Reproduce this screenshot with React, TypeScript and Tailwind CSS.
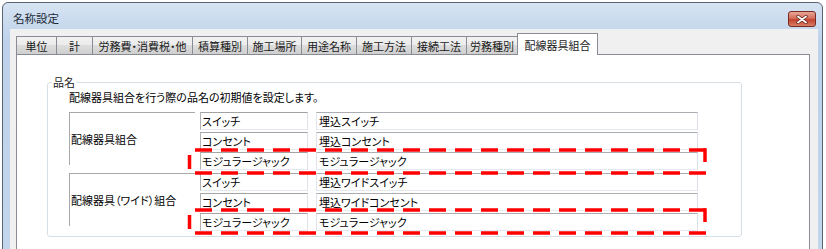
import React from "react"

const tabs = [
    { label: "単位", w: "w-[40px]" },
    { label: "計", w: "w-[36px]" },
    { label: "労務費・消費税・他", w: "w-[100px]" },
    { label: "積算種別", w: "w-[55px]" },
    { label: "施工場所", w: "w-[54px]" },
    { label: "用途名称", w: "w-[55px]" },
    { label: "施工方法", w: "w-[55px]" },
    { label: "接続工法", w: "w-[55px]" },
    { label: "労務種別", w: "w-[52px]" },
]

const groups = [
    {
        label: "配線器具組合",
        rows: [
            ["スイッチ", "埋込スイッチ"],
            ["コンセント", "埋込コンセント"],
            ["モジュラージャック", "モジュラージャック"],
        ],
    },
    {
        label: "配線器具（ワイド）組合",
        rows: [
            ["スイッチ", "埋込ワイドスイッチ"],
            ["コンセント", "埋込ワイドコンセント"],
            ["モジュラージャック", "モジュラージャック"],
        ],
    },
]

function Highlight({ top, bottom }: { top: number; bottom: number }) {
    return (
        <g stroke="#ff0000" strokeWidth={3.5} fill="none">
            <line x1={195} y1={top} x2={707} y2={top} strokeDasharray="17 9" />
            <line x1={195} y1={bottom} x2={707} y2={bottom} strokeDasharray="17 9" />
            <line x1={705} y1={top - 1.75} x2={705} y2={top + 12} />
            <line x1={189.5} y1={top + 5} x2={189.5} y2={bottom - 4} />
        </g>
    )
}

export default function App() {
    return (
        <div className="relative w-[826px] h-[249px] overflow-hidden bg-white pt-[2px] pl-[2px] font-['Noto_Sans_CJK_JP',sans-serif] [font-feature-settings:'palt'] text-[11px] leading-[14px] text-black">
            {/* Window */}
            <div className="w-[821px] h-[270px] flex flex-col border border-[#5a6472] rounded-t-[6px] bg-[linear-gradient(to_bottom,#d6e3f2,#bdd2ea_40px,#c2d6ec)]">
                {/* Title bar */}
                <div className="h-[26px] flex items-center justify-between pl-[10px] pr-[6px]">
                    <span className="text-[11.5px] text-[#1e2a3a] mt-[4px]">名称設定</span>
                    <div className="mt-[6px] w-[28px] h-[16px] rounded-[3px] border border-[#7a2a22] bg-[linear-gradient(to_bottom,#e8a796,#d36f5c_45%,#c2432e_55%,#d77e66)] flex items-center justify-center">
                        <svg width="12" height="9" viewBox="0 0 12 9">
                            <path d="M2 1.5 L10 7.5 M10 1.5 L2 7.5" stroke="#5a1a14" strokeWidth="3.2" strokeLinecap="round" />
                            <path d="M2 1.5 L10 7.5 M10 1.5 L2 7.5" stroke="#ffffff" strokeWidth="1.8" strokeLinecap="round" />
                        </svg>
                    </div>
                </div>

                {/* Client area */}
                <div className="flex-1 ml-[7px] mr-[4px] bg-[#f0f0f0] flex flex-col pt-[4px] pl-[6px] pr-[8px]">
                    {/* Tabs */}
                    <div className="flex items-end h-[21px] relative z-10">
                        {tabs.map((t, i) => (
                            <div
                                key={i}
                                className={`${t.w} h-[18px] shrink-0 flex items-center justify-center border-t border-l border-[#898c95] bg-[linear-gradient(to_bottom,#f2f2f2,#ebebeb_50%,#dddddd_50%,#cfcfcf)] text-[#1a1a1a] whitespace-nowrap ${i === tabs.length - 1 ? "border-r" : ""}`}
                            >
                                {t.label}
                            </div>
                        ))}
                        <div className="w-[81px] h-[22px] -mb-[1px] -ml-[1px] shrink-0 flex items-center justify-center border-t border-l border-r border-[#898c95] bg-white text-[#1a1a1a]">
                            配線器具組合
                        </div>
                    </div>

                    {/* Panel */}
                    <div className="flex-1 border border-[#898c95] bg-white pt-[20px]">
                        <fieldset className="ml-[30px] w-[695px] border border-[#d5dfe5] rounded-[3px] pb-[5px]">
                            <legend className="ml-[4px] px-[1px] text-[#1a1a1a]">品名</legend>
                            <div className="pl-[21px] mt-[1px]">配線器具組合を行う際の品名の初期値を設定します。</div>

                            <div className="pl-[21px] mt-[8px] flex flex-col gap-[3px]">
                                {groups.map((g, gi) => (
                                    <div key={gi} className="flex">
                                        <div className="w-[126px] h-[53px] shrink-0 border-t border-l border-[#a9a9a9] flex items-center pl-[1px] whitespace-nowrap">
                                            {g.label}
                                        </div>
                                        <div className="ml-[5px] flex flex-col gap-[2px]">
                                            {g.rows.map((r, ri) => (
                                                <div key={ri} className="flex gap-[8px]">
                                                    <div className="w-[108px] h-[18px] border border-t-[#a3a3a3] border-l-[#b3b3b3] border-r-[#dfe2e8] border-b-[#e3e9ef] pl-[1px] flex items-center whitespace-nowrap">
                                                        {r[0]}
                                                    </div>
                                                    <div className="w-[382px] h-[18px] border border-t-[#abadb3] border-l-[#e2e3ea] border-r-[#dbdfe6] border-b-[#e3e9ef] pl-[2px] flex items-center whitespace-nowrap">
                                                        {r[1]}
                                                    </div>
                                                </div>
                                            ))}
                                        </div>
                                    </div>
                                ))}
                            </div>
                        </fieldset>
                    </div>
                </div>
            </div>

            {/* Red dashed highlights */}
            <svg className="absolute inset-0 pointer-events-none" width="826" height="249">
                <Highlight top={150} bottom={173} />
                <Highlight top={210} bottom={233} />
            </svg>
        </div>
    )
}
